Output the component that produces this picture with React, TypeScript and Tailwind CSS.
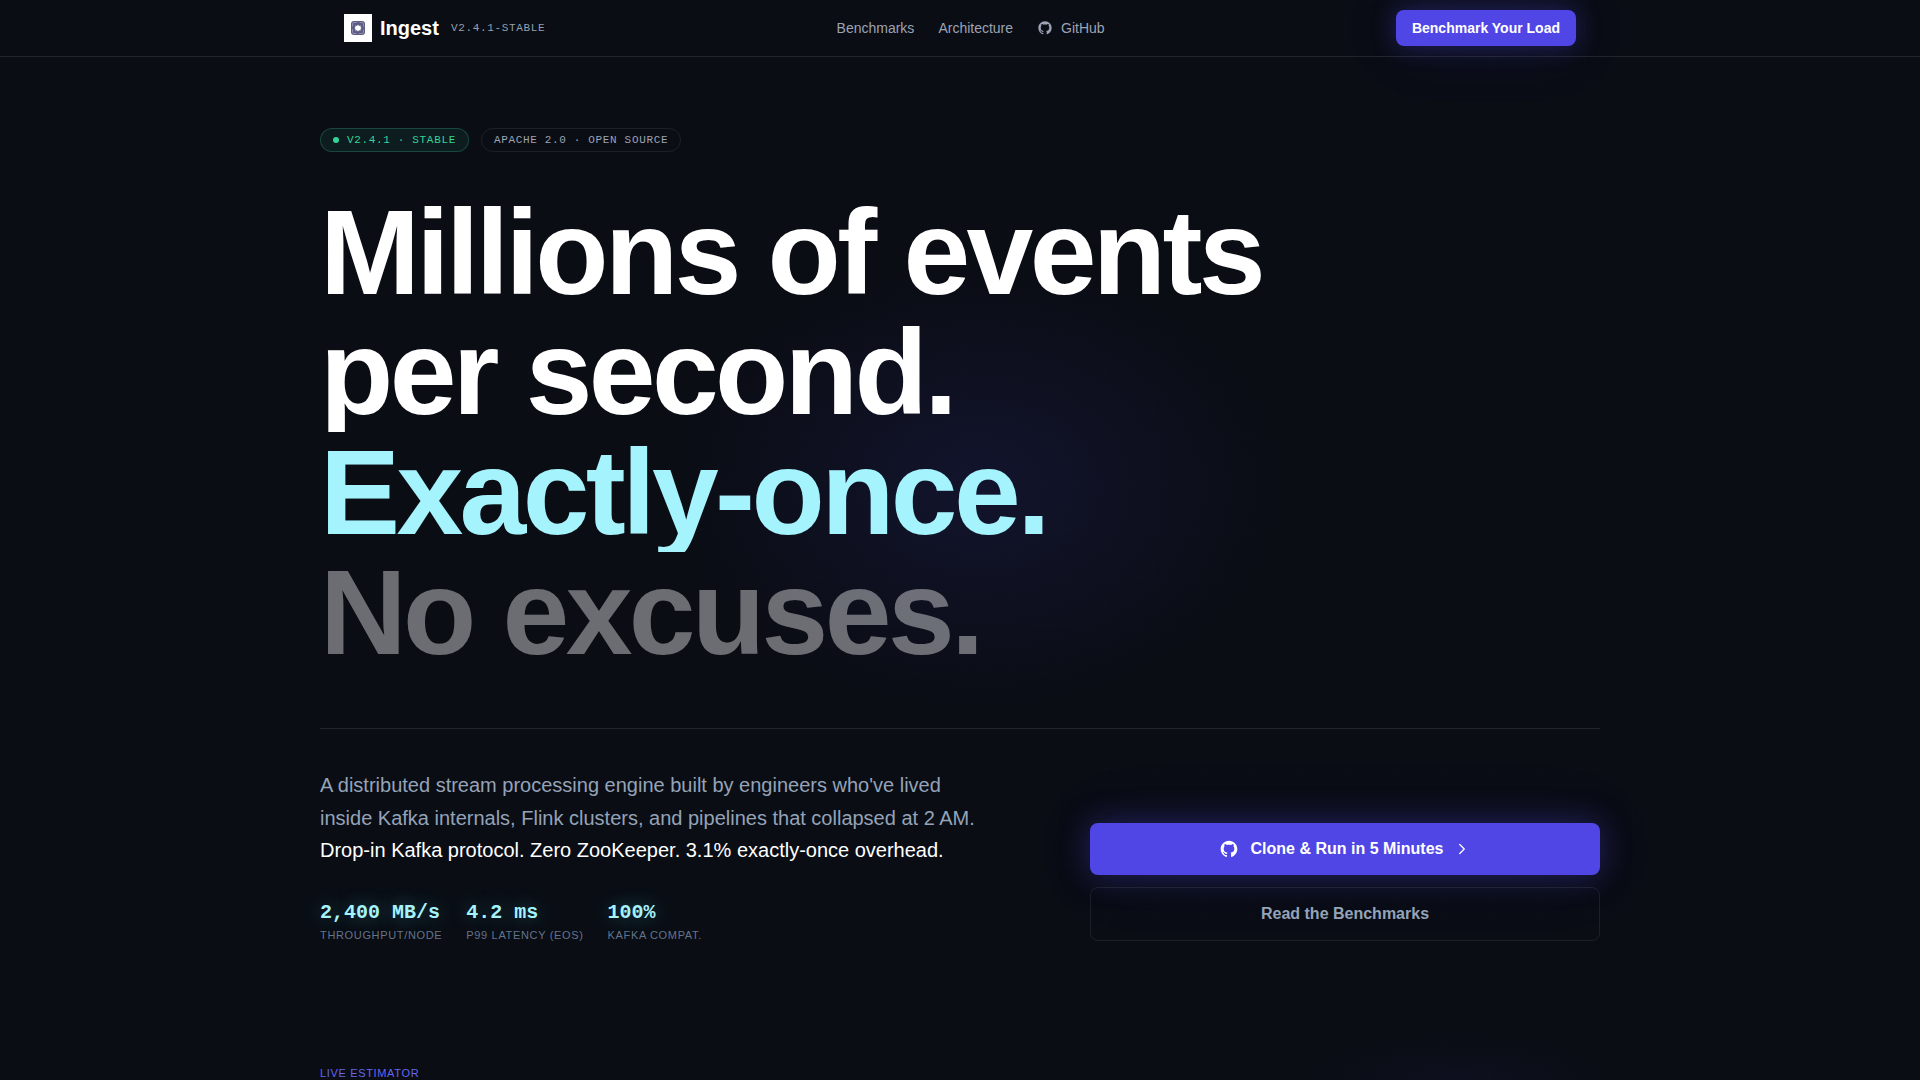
import React from 'react';
import { ChevronRight } from 'lucide-react';
import { RiGithubFill } from 'react-icons/ri';

interface Stat {
  value: string;
  label: string;
}

const stats: Stat[] = [
  { value: '2,400 MB/s', label: 'Throughput/node' },
  { value: '4.2 ms', label: 'P99 latency (EOS)' },
  { value: '100%', label: 'Kafka compat.' },
];

const Logo: React.FC = () => (
  <svg viewBox="0 0 28 28" className="size-7" aria-hidden="true">
    <rect width="28" height="28" fill="#ffffff" />
    <rect x="7" y="7" width="14" height="14" rx="3" fill="#5c5c84" />
    <path
      d="M8.5 12.5V10a1.5 1.5 0 0 1 1.5-1.5h3M15.5 8.5H18a1.5 1.5 0 0 1 1.5 1.5v3M19.5 15.5V18a1.5 1.5 0 0 1-1.5 1.5h-3M12.5 19.5H10A1.5 1.5 0 0 1 8.5 18v-3"
      fill="none"
      stroke="#9a9abb"
      strokeWidth="0.8"
    />
    <path d="M14 10.6l1 1.5 1.8-.5-.4 1.5 1.2.9-1.2 1 .4 1.6-1.8-.4-1 1.4-1-1.4-1.8.4.4-1.6-1.2-1 1.2-.9-.4-1.5 1.8.5z" fill="#ffffff" />
  </svg>
);

const Header: React.FC = () => (
  <header className="relative border-b border-white/10">
    <div className="mx-auto flex h-14 max-w-7xl items-center justify-between px-6">
      <div className="flex items-center gap-3">
        <a href="#" className="flex items-center gap-2 text-xl font-bold text-white">
          <Logo />
          Ingest
        </a>
        <span className="font-['Liberation_Mono',monospace] text-[11px] uppercase tracking-[0.06em] text-[#94a0b0]">
          v2.4.1-stable
        </span>
      </div>
      <nav className="flex items-center gap-6 text-sm text-[#9ca3b4]">
        <a href="#benchmarks">Benchmarks</a>
        <a href="#architecture">Architecture</a>
        <a href="#github" className="flex items-center gap-2">
          <RiGithubFill className="size-4" />
          GitHub
        </a>
      </nav>
      <button className="h-9 rounded-lg bg-[#4f46e5] px-4 text-sm font-semibold text-white shadow-[0_0_24px_rgba(79,70,229,0.35),0_0_64px_rgba(79,70,229,0.12)]">
        Benchmark Your Load
      </button>
    </div>
  </header>
);

const Hero: React.FC = () => (
  <section className="pt-[71px]">
    <div className="flex gap-3 font-['Liberation_Mono',monospace] text-[11px] uppercase leading-4 tracking-[0.06em]">
      <span className="flex items-center gap-2 rounded-full border border-[#34d399]/25 bg-[#34d399]/8 px-3 py-[3px] text-[#34d399]">
        <span className="size-1.5 rounded-full bg-[#34d399]" />
        v2.4.1 · stable
      </span>
      <span className="rounded-full border border-white/8 px-3 py-[3px] text-[#9ca3b4]">
        Apache 2.0 · Open Source
      </span>
    </div>

    {/* each line clips its own descenders */}
    <h1 className="mt-10 text-[120px] font-bold leading-none tracking-[-0.03em] text-white">
      <span className="block overflow-hidden">Millions of events</span>
      <span className="block overflow-hidden">per second.</span>
      <span className="block overflow-hidden text-[#a5f3fc]">Exactly-once.</span>
      <span className="block overflow-hidden text-white/40">No excuses.</span>
    </h1>

    <div className="mt-14 grid grid-cols-12 items-end gap-10 border-t border-white/10 pt-10">
      <div className="col-span-7">
        <p className="max-w-2xl text-xl leading-relaxed text-[#94a3b8]">
          A distributed stream processing engine built by engineers who've lived inside Kafka internals, Flink
          clusters, and pipelines that collapsed at 2 AM.{' '}
          <span className="text-white">Drop-in Kafka protocol. Zero ZooKeeper. 3.1% exactly-once overhead.</span>
        </p>
        <dl className="mt-8 flex gap-6">
          {stats.map((stat) => (
            <div key={stat.label} className="flex flex-col-reverse gap-[3px]">
              <dt className="text-[11px] uppercase leading-none tracking-[0.06em] text-[#64748b]">{stat.label}</dt>
              <dd className="font-['Liberation_Mono',monospace] text-xl font-bold text-[#a5f3fc] [text-shadow:0_0_20px_rgba(103,232,249,0.4)]">
                {stat.value}
              </dd>
            </div>
          ))}
        </dl>
      </div>
      <div className="col-span-5 flex flex-col gap-3 font-semibold">
        <button className="flex items-center justify-center gap-2.5 rounded-lg bg-[#4f46e5] py-[14px] text-white shadow-[0_0_32px_rgba(79,70,229,0.35),0_0_72px_rgba(79,70,229,0.08)]">
          <span className="flex items-center gap-3">
            <RiGithubFill className="size-5" />
            Clone &amp; Run in 5 Minutes
          </span>
          <ChevronRight className="size-[18px]" strokeWidth={1.75} />
        </button>
        <button className="rounded-lg border border-white/8 py-[14px] text-[#94a3b8]">Read the Benchmarks</button>
      </div>
    </div>
  </section>
);

export default function App() {
  return (
    <div className="relative h-screen overflow-hidden bg-[#0a0d14] font-['Liberation_Sans',Arial,sans-serif]">
      {/* faint 48px grid and the indigo glow behind the headline */}
      <div className="pointer-events-none absolute inset-0 bg-[linear-gradient(rgba(255,255,255,0.005)_1px,transparent_1px),linear-gradient(90deg,rgba(255,255,255,0.005)_1px,transparent_1px)] bg-[size:48px_48px]" />
      <div className="pointer-events-none absolute inset-0 bg-[radial-gradient(300px_220px_at_51%_45%,rgba(79,70,229,0.12),transparent)]" />
      {/* top of the estimator's glow */}
      <div className="pointer-events-none absolute inset-0 bg-[radial-gradient(150px_44px_at_76%_100%,rgba(79,70,229,0.05),transparent)]" />
      <Header />
      <main className="relative mx-auto max-w-7xl">
        <Hero />
        <section className="pt-31">
          <h2 className="text-[11px] uppercase leading-4 tracking-[0.06em] text-[#6366f1]">Live Estimator</h2>
        </section>
      </main>
    </div>
  );
}
